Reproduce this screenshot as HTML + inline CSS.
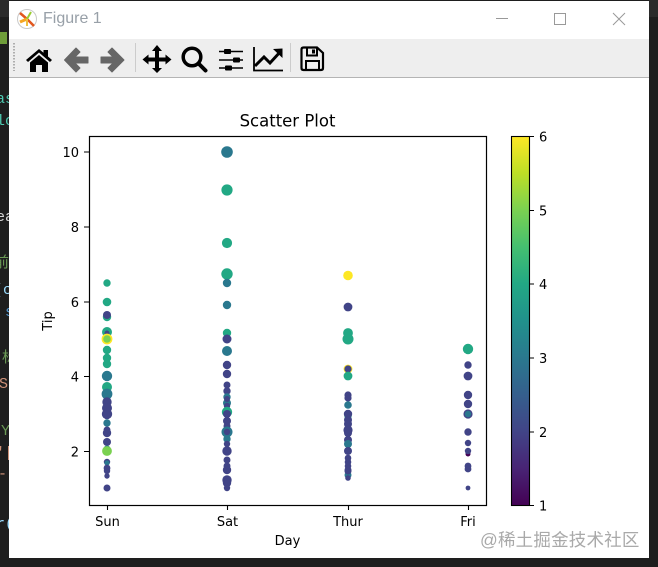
<!DOCTYPE html>
<html><head><meta charset="utf-8"><style>
html,body{margin:0;padding:0;width:658px;height:567px;overflow:hidden;background:#1e1e1e}
#bg{position:absolute;left:0;top:0;width:658px;height:567px;background:#1e1e1e}
.c{position:absolute;left:0;font:15px "Liberation Mono","Noto Sans CJK SC",monospace;white-space:pre;line-height:18px}
#win{position:absolute;left:9px;top:1px;width:640px;height:557px;background:#fff}
#tb{position:absolute;left:0;top:38px;width:640px;height:38px;background:#eee;border-bottom:1px solid #b4b4b4}
#t{position:absolute;left:34px;top:9px;font:16px "Liberation Sans",sans-serif;color:#98a0a8}
svg{position:absolute;left:0;top:0}
svg text{font-family:"DejaVu Sans",sans-serif;font-size:13px;fill:#000}
.a{fill:#414487}.b{fill:#2a788e}.g{fill:#22a884}.l{fill:#7ad151}.y{fill:#fde725}.p{fill:#440154}
</style></head><body>
<div id="bg"></div>
<div style="position:absolute;left:649px;top:0;width:9px;height:17px;background:#2b2b2b"></div>
<div style="position:absolute;left:0;top:0;width:9px;height:17px;background:#2b2b2b"></div>
<div style="position:absolute;left:0;top:32px;width:7px;height:12px;background:#6f9e3a"></div>
<div class="c" style="top:91px;left:-4px;color:#4ec9b0">as</div>
<div class="c" style="top:113px;left:-4px;color:#4ec9b0">lo</div>
<div class="c" style="top:209px;left:-4px;color:#d4d4d4">ea</div>
<div class="c" style="top:255px;left:-6px;color:#6a9955">前</div>
<div class="c" style="top:282px;left:-6px;color:#9cdcfe">(c</div>
<div class="c" style="top:304px;left:5px;color:#569cd6">s</div>
<div class="c" style="top:350px;left:2px;color:#6a9955">标</div>
<div class="c" style="top:376px;left:-1px;color:#ce9178">So</div>
<div class="c" style="top:423px;left:1px;color:#6a9955">Y</div>
<div class="c" style="top:445px;left:-4px;color:#ce9178">'[</div>
<div class="c" style="top:466px;left:-2px;color:#ce9178">--</div>
<div class="c" style="top:516px;left:-4px;color:#9cdcfe">r(</div>
<div id="win"><div id="tb"></div><div id="t">Figure 1</div></div>
<svg width="658" height="567" viewBox="0 0 658 567">
<!-- logo -->
<circle cx="27" cy="19" r="9.500" fill="#fff" stroke="#c9c9c9"/>
<path d="M27 19L20 13M27 19L34 26" stroke="#e2571e" stroke-width="2.500"/>
<path d="M27 19L20 22" stroke="#f5a623" stroke-width="3"/>
<path d="M27 19L31 12" stroke="#9acd32" stroke-width="2"/>
<path d="M27 19L27 26" stroke="#f0c040" stroke-width="2"/>
<!-- window buttons -->
<path d="M496 18.500H508" stroke="#999" fill="none"/>
<rect x="554.500" y="13.500" width="11" height="11" fill="none" stroke="#999"/>
<path d="M613 13L625 25M625 13L613 25" stroke="#999" fill="none"/>
<!-- grip -->
<path d="M14 43V71" stroke="#999" stroke-width="1.500" stroke-dasharray="1.500 1.500"/>
<!-- home -->
<path d="M26 60L39 49L43.500 52.800V50H48V56.500L52 60L50 62L39 52.500L28 62Z" fill="#000"/>
<path d="M30 62.500L39 55L48 62.500V72H42V65H36V72H30Z" fill="#000"/>
<!-- back -->
<path d="M76 48L80 52L75 57H88V63H75L80 68L76 72L64.500 60Z" fill="#666" stroke="#666" stroke-linejoin="round"/>
<!-- forward -->
<path d="M112 48L108 52L113 57H101V63H113L108 68L112 72L124 60Z" fill="#666" stroke="#666" stroke-linejoin="round"/>
<path d="M135.500 43V72M290.500 43V72" stroke="#ccc"/>
<!-- move -->
<path d="M157 45L162 51H159V57.500H165.500V54.500L171.500 59.500L165.500 64.500V61.500H159V68H162L157 73L152 68H155V61.500H148.500V64.500L142.500 59.500L148.500 54.500V57.500H155V51H152Z" fill="#000"/>
<!-- zoom -->
<circle cx="192" cy="57" r="8.800" fill="none" stroke="#000" stroke-width="3.500"/>
<path d="M198.500 63.500L205.500 70.500" stroke="#000" stroke-width="4" stroke-linecap="round"/>
<!-- sliders -->
<path d="M219 51.500H243M219 60H243M219 68H243" stroke="#000" stroke-width="1.400"/>
<rect x="224" y="49" width="7" height="5" rx="1"/><rect x="233" y="57.500" width="7" height="5" rx="1"/><rect x="225" y="65.500" width="7" height="5" rx="1"/>
<!-- chart -->
<path d="M254 47V70.500H283" fill="none" stroke="#000" stroke-width="1.800"/>
<path d="M255 66L264 57L270 63L281 51" fill="none" stroke="#000" stroke-width="3"/>
<path d="M273 49L282.500 48.500V58Z" fill="#000"/>
<!-- save -->
<path d="M301.500 49.500Q301.500 47.500 303.500 47.500H317L323 53V68Q323 70 321 70H303.500Q301.500 70 301.500 68Z" fill="none" stroke="#000" stroke-width="2.200"/>
<path d="M307 48V55.500H317V48" fill="none" stroke="#000" stroke-width="2"/>
<rect x="312" y="49.500" width="3" height="4"/>
<path d="M306 70V61H319V70" fill="none" stroke="#000" stroke-width="2"/>
<!-- plot -->
<text x="287.500" y="126.500" text-anchor="middle" style="font-size:16.500px">Scatter Plot</text>
<g>
<circle class="g" cx="107" cy="283" r="3.700"/><circle class="g" cx="107" cy="302" r="4.300"/><circle class="g" cx="107" cy="317" r="4.200"/><circle class="a" cx="107" cy="315" r="4"/>
<circle class="g" cx="107" cy="332" r="5"/><circle class="a" cx="107" cy="333" r="2.500"/><circle class="y" cx="107" cy="339" r="5.400"/><circle class="l" cx="107" cy="339" r="3.800"/>
<circle class="g" cx="107" cy="350" r="4.200"/><circle class="g" cx="107" cy="358" r="4.200"/><circle class="g" cx="107" cy="364" r="4.200"/>
<circle class="b" cx="107" cy="376" r="5.200"/><circle class="g" cx="107" cy="387" r="5"/><circle class="b" cx="107" cy="394" r="5.400"/>
<circle class="a" cx="107" cy="402" r="4.700"/><circle class="a" cx="107" cy="408" r="5"/><circle class="a" cx="107" cy="414" r="5.200"/>
<circle class="b" cx="107" cy="423" r="3.700"/><circle class="a" cx="107" cy="430" r="3.500"/><circle class="a" cx="107" cy="433" r="4.200"/><circle class="a" cx="107" cy="442" r="4"/>
<circle class="b" cx="107" cy="449" r="3.500"/><circle class="l" cx="107" cy="451" r="4.900"/>
<circle class="a" cx="107" cy="462" r="3.200"/><circle class="b" cx="107" cy="463" r="2.600"/><circle class="a" cx="107" cy="468" r="3.400"/><circle class="a" cx="107" cy="471" r="3.200"/><circle class="a" cx="107" cy="476" r="2.700"/><circle class="a" cx="107" cy="488" r="3.500"/>

<circle class="b" cx="227" cy="152" r="5.800"/><circle class="g" cx="227" cy="190" r="5.600"/><circle class="g" cx="227" cy="243" r="5.100"/><circle class="g" cx="227" cy="274" r="5.700"/><circle class="b" cx="227" cy="283" r="4.200"/><circle class="b" cx="227" cy="305" r="4.200"/>
<circle class="g" cx="227" cy="333" r="4.200"/><circle class="a" cx="227" cy="339" r="4.500"/><circle class="b" cx="227" cy="351" r="5"/><circle class="a" cx="227" cy="365" r="4.200"/><circle class="a" cx="227" cy="374" r="4.200"/><circle class="a" cx="227" cy="385" r="3.500"/><circle class="a" cx="227" cy="391" r="3.700"/><circle class="b" cx="227" cy="397" r="3.700"/><circle class="b" cx="227" cy="403" r="4"/><circle class="a" cx="227" cy="399" r="3"/>
<circle class="a" cx="227" cy="406" r="3.200"/><circle class="g" cx="227" cy="412" r="5.200"/><circle class="a" cx="227" cy="414" r="4"/><circle class="a" cx="227" cy="421" r="4"/><circle class="a" cx="227" cy="426" r="3.500"/><circle class="b" cx="227" cy="432" r="5.500"/><circle class="a" cx="227" cy="432" r="3.200"/><circle class="b" cx="227" cy="439" r="3.700"/><circle class="a" cx="227" cy="444" r="3.200"/><circle class="a" cx="227" cy="451" r="4.700"/>
<circle class="a" cx="227" cy="460" r="3.500"/><circle class="a" cx="227" cy="466" r="3.500"/><circle class="a" cx="227" cy="470" r="4.200"/><circle class="a" cx="227" cy="480" r="4.700"/><circle class="a" cx="227" cy="483" r="4.200"/><circle class="a" cx="227" cy="488" r="3.200"/>

<circle class="y" cx="348" cy="275.500" r="4.800"/><circle class="a" cx="348" cy="307" r="4.400"/><circle class="g" cx="348" cy="333" r="4.900"/><circle class="g" cx="348" cy="339" r="5.500"/><circle class="y" cx="348" cy="369" r="4.400"/><circle class="a" cx="348" cy="369" r="3.600"/><circle class="g" cx="348" cy="376" r="4.400"/>
<circle class="a" cx="348" cy="395" r="3.600"/><circle class="a" cx="348" cy="398" r="3.600"/><circle class="b" cx="348" cy="405" r="3.800"/><circle class="g" cx="348" cy="416" r="3.700"/><circle class="a" cx="348" cy="414" r="4.200"/><circle class="a" cx="348" cy="420" r="4"/><circle class="a" cx="348" cy="424" r="4"/><circle class="a" cx="348" cy="430" r="4.600"/><circle class="a" cx="348" cy="433" r="4"/><circle class="a" cx="348" cy="440" r="4"/><circle class="b" cx="348" cy="444" r="4"/><circle class="a" cx="348" cy="451" r="4"/>
<circle class="a" cx="348" cy="458" r="3.300"/><circle class="a" cx="348" cy="462" r="3.300"/><circle class="a" cx="348" cy="466" r="3.300"/><circle class="a" cx="348" cy="470" r="3.500"/><circle class="b" cx="348" cy="475" r="3.500"/><circle class="a" cx="348" cy="471" r="3.500"/><circle class="a" cx="348" cy="478" r="2.800"/>

<circle class="g" cx="468" cy="349" r="5.200"/><circle class="a" cx="468" cy="365" r="3.700"/><circle class="a" cx="468" cy="376" r="4.400"/><circle class="a" cx="468" cy="395" r="4.200"/><circle class="a" cx="468" cy="404" r="4.200"/><circle class="a" cx="468" cy="414" r="4.600"/><circle class="b" cx="468" cy="414" r="3.200"/><circle class="a" cx="468" cy="432" r="3.700"/><circle class="a" cx="468" cy="443" r="3.200"/><circle class="p" cx="468" cy="454" r="2.500"/><circle class="a" cx="468" cy="451" r="3.200"/><circle class="a" cx="468" cy="466" r="3.400"/><circle class="a" cx="468" cy="469" r="3.400"/><circle class="a" cx="468" cy="488" r="2.400"/>
</g>
<rect x="89.500" y="136.500" width="397" height="369" fill="none" stroke="#000" stroke-width="1.200"/>
<path d="M107.500 505V510M227.500 505V510M348.500 505V510M468.500 505V510M89 152H84M89 227H84M89 302H84M89 376.500H84M89 451.500H84" stroke="#000" stroke-width="1.100"/>
<g text-anchor="middle"><text x="107.500" y="526">Sun</text><text x="227.500" y="526">Sat</text><text x="348" y="526">Thur</text><text x="468" y="526">Fri</text><text x="287.500" y="545">Day</text></g>
<g text-anchor="end"><text x="79" y="157">10</text><text x="79" y="232">8</text><text x="79" y="307">6</text><text x="79" y="381.500">4</text><text x="79" y="456.500">2</text></g>
<text transform="translate(52,321) rotate(-90)" text-anchor="middle">Tip</text>
<!-- colorbar -->
<defs><linearGradient id="v" x1="0" y1="1" x2="0" y2="0"><stop offset="0" stop-color="#440154"/><stop offset=".1" stop-color="#482475"/><stop offset=".2" stop-color="#414487"/><stop offset=".3" stop-color="#355f8d"/><stop offset=".4" stop-color="#2a788e"/><stop offset=".5" stop-color="#21918c"/><stop offset=".6" stop-color="#22a884"/><stop offset=".7" stop-color="#44bf70"/><stop offset=".8" stop-color="#7ad151"/><stop offset=".9" stop-color="#bddf26"/><stop offset="1" stop-color="#fde725"/></linearGradient></defs>
<rect x="511.500" y="136.500" width="18" height="369" fill="url(#v)" stroke="#000" stroke-width="1.100"/>
<path d="M529 136.500H534M529 210.500H534M529 284H534M529 358H534M529 432H534M529 505.500H534" stroke="#000" stroke-width="1.100"/>
<g><text x="539" y="141.500">6</text><text x="539" y="215.500">5</text><text x="539" y="289">4</text><text x="539" y="363">3</text><text x="539" y="437">2</text><text x="539" y="510.500">1</text></g>
<text x="480" y="546" style="font-family:'Liberation Sans','Noto Sans CJK SC',sans-serif;font-size:17.500px;fill:#a9a9a9;letter-spacing:.2px">@稀土掘金技术社区</text>
</svg>
</body></html>
